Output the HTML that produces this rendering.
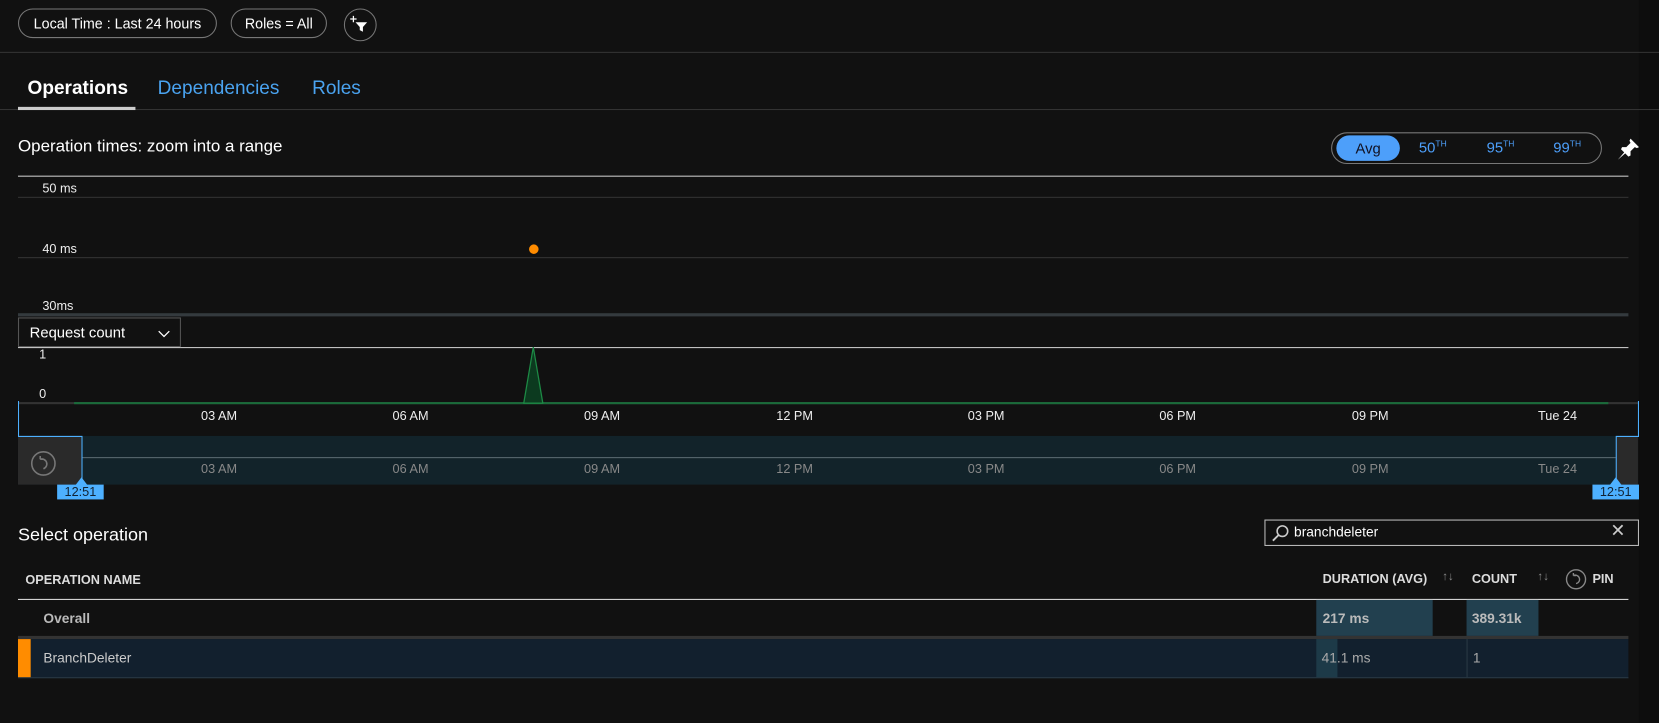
<!DOCTYPE html>
<html><head><meta charset="utf-8"><style>
html,body{margin:0;padding:0;background:#111;width:1659px;height:723px;overflow:hidden;font-family:"Segoe UI","Liberation Sans",sans-serif;color:#eee}
#w{position:absolute;left:0;top:0;width:1568px;height:683px;transform:scale(1.0581);transform-origin:0 0;background:#111}
.a{position:absolute;white-space:nowrap}
.pill{position:absolute;border:1px solid #777;border-radius:15px;height:28px;line-height:28px;font-size:14px;color:#fff;text-align:center;box-sizing:border-box}
.ax{position:absolute;font-size:12px;transform:translateX(-50%)}
.hl{position:absolute;height:1px}
</style></head><body><div id="w">
<div class="a" style="left:1549px;top:0;width:19px;height:683px;background:#0d0d0d"></div>
<div class="pill" style="left:17px;top:8px;width:188px;font-size:13.5px">Local Time : Last 24 hours</div>
<div class="pill" style="left:218px;top:8px;width:91px;font-size:13.5px">Roles = All</div>
<div class="pill" style="left:325px;top:8px;width:31px;border-radius:50%;height:31px"></div>
<svg class="a" style="left:325px;top:8px" width="31" height="31"><path d="M9 7v6M6 10h6" stroke="#fff" stroke-width="1.2"/><path d="M11 13h11l-4 4.5v4.5l-3-1.5v-3z" fill="#fff"/></svg>
<div class="hl" style="left:0;top:49px;width:1568px;background:#333"></div>
<div class="a" style="left:26px;top:73px;font-size:18px;font-weight:bold;color:#fff">Operations</div>
<div class="a" style="left:149px;top:73px;font-size:18px;color:#4aa3f0">Dependencies</div>
<div class="a" style="left:295px;top:73px;font-size:18px;color:#4aa3f0">Roles</div>
<div class="hl" style="left:0;top:103px;width:1568px;background:#333"></div>
<div class="a" style="left:17px;top:101px;width:111px;height:3px;background:#ccc"></div>
<div class="a" style="left:17px;top:130px;font-size:16px;color:#fff">Operation times: zoom into a range</div>
<div class="a" style="left:1258px;top:125px;width:256px;height:30px;border:1px solid #777;border-radius:16px;box-sizing:border-box"></div>
<div class="a" style="left:1263px;top:128px;width:60px;height:24px;border-radius:12px;background:#4d9ffa;color:#112;font-size:14px;text-align:center;line-height:24px">Avg</div>
<div class="a" style="left:1341px;top:131px;font-size:14px;color:#4d9ffa">50<sup style="font-size:8px">TH</sup></div>
<div class="a" style="left:1405px;top:131px;font-size:14px;color:#4d9ffa">95<sup style="font-size:8px">TH</sup></div>
<div class="a" style="left:1468px;top:131px;font-size:14px;color:#4d9ffa">99<sup style="font-size:8px">TH</sup></div>
<svg class="a" style="left:1527px;top:129px" width="24" height="24"><path d="M14 2l8 8-2 1-2-1-4 4 0 4-2 1-3-3-7 6 6-7-3-3 1-2 4 0 4-4-1-2z" fill="#fff"/></svg>
<div class="hl" style="left:17px;top:166px;width:1522px;background:#ccc"></div>
<div class="hl" style="left:17px;top:186px;width:1522px;background:#333"></div>
<div class="hl" style="left:17px;top:243px;width:1522px;background:#333"></div>
<div class="a" style="left:17px;top:296px;width:1522px;height:3px;background:#343a3e"></div>
<div class="a" style="left:40px;top:171px;font-size:12px">50 ms</div>
<div class="a" style="left:40px;top:228px;font-size:12px">40 ms</div>
<div class="a" style="left:40px;top:282px;font-size:12px">30ms</div>
<div class="a" style="left:500px;top:231px;width:9px;height:9px;border-radius:50%;background:#ff8c00"></div>
<div class="a" style="left:17px;top:300px;width:154px;height:28px;border:1px solid #555;box-sizing:border-box;font-size:14px;line-height:26px;padding-left:10px;color:#fff">Request count</div>
<svg class="a" style="left:148px;top:310px" width="14" height="10"><path d="M2 3l5 5 5-5" fill="none" stroke="#fff" stroke-width="1.2"/></svg>
<div class="hl" style="left:171px;top:328px;width:1368px;background:#ccc"></div>
<div class="hl" style="left:17px;top:328px;width:154px;background:#ccc"></div>
<div class="a" style="left:37px;top:328px;font-size:12px">1</div>
<div class="a" style="left:37px;top:365px;font-size:12px">0</div>
<div class="a" style="left:17px;top:380px;width:1531px;height:2px;background:#333"></div>
<div class="a" style="left:70px;top:380px;width:1450px;height:2px;background:#1a6b3a"></div>
<svg class="a" style="left:494px;top:326px" width="20" height="56"><path d="M1 55L10 2L19 55Z" fill="#0c3a1f" stroke="#1d8a45" stroke-width="1.2"/></svg>
<div class="ax" style="left:207px;top:386px">03 AM</div>
<div class="ax" style="left:388px;top:386px">06 AM</div>
<div class="ax" style="left:569px;top:386px">09 AM</div>
<div class="ax" style="left:751px;top:386px">12 PM</div>
<div class="ax" style="left:932px;top:386px">03 PM</div>
<div class="ax" style="left:1113px;top:386px">06 PM</div>
<div class="ax" style="left:1295px;top:386px">09 PM</div>
<div class="ax" style="left:1472px;top:386px">Tue 24</div>
<div class="a" style="left:17px;top:412px;width:1531px;height:46px;background:#12232a"></div>
<div class="a" style="left:17px;top:412px;width:60px;height:46px;background:#2a2a2a"></div>
<div class="a" style="left:1527px;top:412px;width:21px;height:46px;background:#2a2a2a"></div>
<div class="hl" style="left:77px;top:432px;width:1450px;background:#5a6a70"></div>
<svg class="a" style="left:28px;top:425px" width="26" height="26"><circle cx="13" cy="13" r="11" fill="none" stroke="#777" stroke-width="1.5"/><path d="M10 9a4.5 4.5 0 1 1 3 9M10 9l0-3M10 9l3 0" fill="none" stroke="#777" stroke-width="1.5"/></svg>
<div class="ax" style="left:207px;top:436px;color:#888">03 AM</div>
<div class="ax" style="left:388px;top:436px;color:#888">06 AM</div>
<div class="ax" style="left:569px;top:436px;color:#888">09 AM</div>
<div class="ax" style="left:751px;top:436px;color:#888">12 PM</div>
<div class="ax" style="left:932px;top:436px;color:#888">03 PM</div>
<div class="ax" style="left:1113px;top:436px;color:#888">06 PM</div>
<div class="ax" style="left:1295px;top:436px;color:#888">09 PM</div>
<div class="ax" style="left:1472px;top:436px;color:#888">Tue 24</div>
<svg class="a" style="left:16px;top:379px" width="1534" height="82"><path d="M1.5 0V33.5H61.5V80M1532.5 0V33.5H1511.5V80" fill="none" stroke="#4db0ff" stroke-width="1"/><path d="M55 80l6-8 6 8zM1505 80l6-8 6 8z" fill="#4db0ff"/></svg>
<div class="a" style="left:54px;top:458px;width:44px;height:14px;background:#4db0ff;color:#123;font-size:12px;text-align:center;line-height:14px">12:51</div>
<div class="a" style="left:1505px;top:458px;width:44px;height:14px;background:#4db0ff;color:#123;font-size:12px;text-align:center;line-height:14px">12:51</div>
<div class="a" style="left:17px;top:496px;font-size:17px;color:#fff">Select operation</div>
<div class="a" style="left:1195px;top:491px;width:354px;height:25px;border:1px solid #bbb;box-sizing:border-box"></div>
<svg class="a" style="left:1201px;top:495px" width="18" height="18"><circle cx="11" cy="7" r="5" fill="none" stroke="#ccc" stroke-width="1.5"/><path d="M7.5 10.5L2 16" stroke="#ccc" stroke-width="1.8"/></svg>
<div class="a" style="left:1223px;top:495px;font-size:13px;color:#fff">branchdeleter</div>
<div class="a" style="left:1522px;top:492px;font-size:17px;color:#ccc">&#x2715;</div>
<div class="a" style="left:24px;top:541px;font-size:12px;font-weight:bold;color:#ddd">OPERATION NAME</div>
<div class="a" style="left:1250px;top:540px;font-size:12px;font-weight:bold;color:#ddd">DURATION (AVG)</div>
<div class="a" style="left:1363px;top:539px;font-size:11px;color:#888">↑↓</div>
<div class="a" style="left:1391px;top:540px;font-size:12px;font-weight:bold;color:#ddd">COUNT</div>
<div class="a" style="left:1453px;top:539px;font-size:11px;color:#888">↑↓</div>
<svg class="a" style="left:1479px;top:537px" width="21" height="21"><circle cx="10.5" cy="10.5" r="9" fill="none" stroke="#888" stroke-width="1.3"/><path d="M8 7a4 4 0 1 1 2.5 7.5M8 7V4.5M8 7h2.5" fill="none" stroke="#888" stroke-width="1.3"/></svg>
<div class="a" style="left:1505px;top:540px;font-size:12px;font-weight:bold;color:#ddd">PIN</div>
<div class="hl" style="left:17px;top:566px;width:1522px;background:#ddd"></div>
<div class="a" style="left:1244px;top:567px;width:110px;height:34px;background:#22404f"></div>
<div class="a" style="left:1386px;top:567px;width:68px;height:34px;background:#22404f"></div>
<div class="a" style="left:41px;top:577px;font-size:13px;font-weight:bold;color:#bbb">Overall</div>
<div class="a" style="left:1250px;top:577px;font-size:13px;font-weight:bold;color:#bbb">217 ms</div>
<div class="a" style="left:1391px;top:577px;font-size:13px;font-weight:bold;color:#bbb">389.31k</div>
<div class="a" style="left:17px;top:601px;width:1522px;height:3px;background:#333"></div>
<div class="a" style="left:17px;top:604px;width:1522px;height:36px;background:#12202e;border-bottom:1px solid #2a3a45"></div>
<div class="a" style="left:17px;top:604px;width:12px;height:36px;background:#ff8c00"></div>
<div class="a" style="left:1244px;top:604px;width:20px;height:36px;background:#1d3a48"></div>
<div class="a" style="left:1386px;top:604px;width:1px;height:36px;background:#2a3a45"></div>
<div class="a" style="left:41px;top:614px;font-size:13px;color:#ccc">BranchDeleter</div>
<div class="a" style="left:1249px;top:614px;font-size:13px;color:#aaa">41.1 ms</div>
<div class="a" style="left:1392px;top:614px;font-size:13px;color:#aaa">1</div>
</div></body></html>
